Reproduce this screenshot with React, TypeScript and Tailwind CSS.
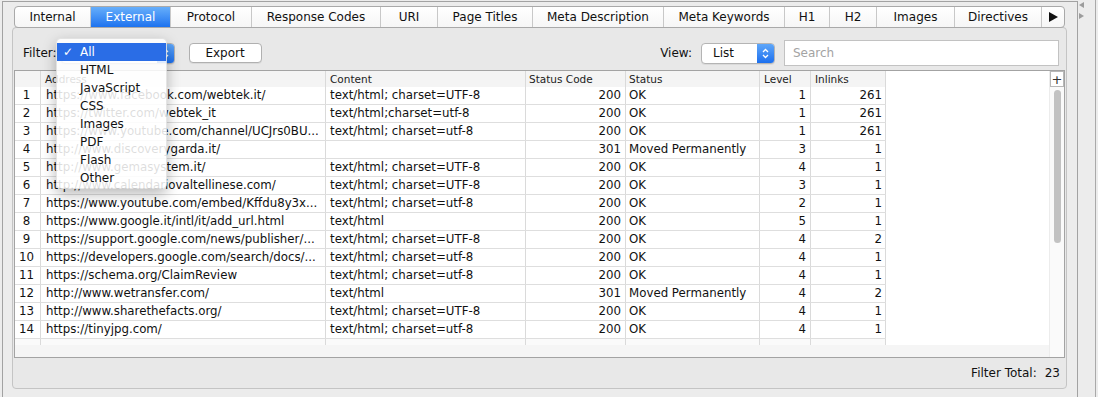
const tabs = [
  { name: "Internal", w: "w-[75px]" },
  { name: "External", w: "w-[80px]", active: true },
  { name: "Protocol", w: "w-[81px]" },
  { name: "Response Codes", w: "w-[129px]" },
  { name: "URI", w: "w-[57px]" },
  { name: "Page Titles", w: "w-[95px]" },
  { name: "Meta Description", w: "w-[131px]" },
  { name: "Meta Keywords", w: "w-[121px]" },
  { name: "H1", w: "w-[45px]" },
  { name: "H2", w: "w-[47px]" },
  { name: "Images", w: "w-[78px]" },
  { name: "Directives", w: "w-[87px]" },
];

const menuItems = ["All", "HTML", "JavaScript", "CSS", "Images", "PDF", "Flash", "Other"];

// address, content, status code, status, level, inlinks
const rows = [
  ["https://www.facebook.com/webtek.it/", "text/html; charset=UTF-8", "200", "OK", "1", "261"],
  ["https://twitter.com/webtek_it", "text/html;charset=utf-8", "200", "OK", "1", "261"],
  ["https://www.youtube.com/channel/UCJrs0BU...", "text/html; charset=utf-8", "200", "OK", "1", "261"],
  ["http://www.discoverygarda.it/", "", "301", "Moved Permanently", "3", "1"],
  ["http://www.gemasystem.it/", "text/html; charset=UTF-8", "200", "OK", "4", "1"],
  ["http://www.calendariovaltellinese.com/", "text/html; charset=UTF-8", "200", "OK", "3", "1"],
  ["https://www.youtube.com/embed/Kffdu8y3x...", "text/html; charset=utf-8", "200", "OK", "2", "1"],
  ["https://www.google.it/intl/it/add_url.html", "text/html", "200", "OK", "5", "1"],
  ["https://support.google.com/news/publisher/...", "text/html; charset=UTF-8", "200", "OK", "4", "2"],
  ["https://developers.google.com/search/docs/...", "text/html; charset=utf-8", "200", "OK", "4", "1"],
  ["https://schema.org/ClaimReview", "text/html; charset=utf-8", "200", "OK", "4", "1"],
  ["http://www.wetransfer.com/", "text/html", "301", "Moved Permanently", "4", "2"],
  ["http://www.sharethefacts.org/", "text/html; charset=UTF-8", "200", "OK", "4", "1"],
  ["https://tinyjpg.com/", "text/html; charset=utf-8", "200", "OK", "4", "1"],
];

const cell = "h-full border-r border-[#dadada] overflow-hidden whitespace-nowrap";

function Chevrons() {
  return (
    <svg width="7" height="11" viewBox="0 0 7 11" fill="none" stroke="white" strokeWidth="1.3">
      <path d="M1 4 L3.5 1.5 L6 4" />
      <path d="M1 7 L3.5 9.5 L6 7" />
    </svg>
  );
}

function Select({ label, className }: { label: string; className: string }) {
  return (
    <div
      className={`flex h-[21px] items-stretch overflow-hidden rounded-[4px] border border-[#b4b4b4] bg-white text-[12px] shadow-[0_1px_0_rgba(0,0,0,0.06)] ${className}`}
    >
      <div className="flex flex-1 items-center pl-[11px]">{label}</div>
      <div className="flex w-[17px] items-center justify-center bg-linear-to-b from-[#5ea6f9] to-[#1b6fee]">
        <Chevrons />
      </div>
    </div>
  );
}

export default function App() {
  return (
    <div className="relative flex h-[397px] w-[1098px] overflow-hidden bg-[#ececec] font-['DejaVu_Sans',sans-serif] text-[#111]">
      <div className="w-[2px] shrink-0" />

      {/* main area */}
      <div className="mt-[1px] flex w-[1076px] shrink-0 flex-col border-l border-t border-r border-[#a2a2a2]">
        {/* tab strip */}
        <div className="relative z-10 mt-[4px] flex pl-[11px]">
          <div className="flex h-[22px] overflow-hidden rounded-[4px] border border-[#a9a9a9] bg-linear-to-b from-white to-[#f6f6f6] text-[12px]">
            {tabs.map((t, i) => (
              <div
                key={t.name}
                className={`flex items-center justify-center ${t.w} ${i > 0 ? "border-l border-[#c8c8c8]" : ""} ${
                  t.active ? "bg-linear-to-b from-[#66aefa] to-[#1c72ef] text-white" : ""
                }`}
              >
                {t.name}
              </div>
            ))}
            <div className="flex w-[23px] items-center justify-center border-l border-[#c8c8c8]">
              <svg width="9" height="10" viewBox="0 0 9 10">
                <path d="M0 0 L9 5 L0 10 Z" fill="#111" />
              </svg>
            </div>
          </div>
        </div>

        {/* content panel */}
        <div className="-mt-[1px] ml-[9px] flex h-[362px] w-[1055px] flex-col rounded-[4px] border border-[#c4c4c4] bg-[#e8e8e8]">
          {/* filter row */}
          <div className="mt-[12px] flex h-[26px] items-center pl-[10px] pr-[7px] text-[12px]">
            <span>Filter:</span>
            <Select label="All" className="ml-[4px] w-[114px]" />
            <div className="ml-[14px] flex h-[20px] w-[73px] items-center justify-center rounded-[4px] border border-[#b0b0b0] bg-white shadow-[0_1px_0_rgba(0,0,0,0.06)]">
              Export
            </div>
            <span className="ml-auto">View:</span>
            <Select label="List" className="ml-[9px] w-[74px]" />
            <div className="ml-[9px] flex h-[26px] w-[275px] items-center border border-[#c2c2c2] bg-white pl-[8px] text-[#a3a3a3]">
              Search
            </div>
          </div>

          {/* table */}
          <div className="ml-[1px] mt-[4px] flex h-[288px] w-[1051px] border border-[#a3a3a3] bg-white">
            <div className="flex w-[1034px] flex-col">
              <div className="flex h-[274px]">
                <div className="flex w-[871px] flex-col">
                  {/* header */}
                  <div className="flex h-[16px] bg-[#f4f4f4] text-[10.5px] leading-[16px] text-[#222]">
                    <div className={`${cell} w-[26px] border-[#d6d6d6]`} />
                    <div className={`${cell} w-[285px] border-[#d6d6d6] pl-[4px]`}>Address</div>
                    <div className={`${cell} w-[200px] border-[#d6d6d6] pl-[4px]`}>Content</div>
                    <div className={`${cell} w-[100px] border-[#d6d6d6] pl-[3px]`}>Status Code</div>
                    <div className={`${cell} w-[134px] border-[#d6d6d6] pl-[3px]`}>Status</div>
                    <div className={`${cell} w-[51px] border-[#d6d6d6] pl-[4px]`}>Level</div>
                    <div className={`${cell} w-[75px] border-[#d6d6d6] pl-[4px]`}>Inlinks</div>
                  </div>
                  {/* rows */}
                  {rows.map((r, i) => (
                    <div key={i} className="flex h-[18px] border-b border-[#dedede] text-[11.8px] leading-[17px]">
                      <div className={`${cell} w-[26px] pr-[2px] text-center`}>{i + 1}</div>
                      <div className={`${cell} w-[285px] pl-[5px]`}>{r[0]}</div>
                      <div className={`${cell} w-[200px] pl-[4px]`}>{r[1]}</div>
                      <div className={`${cell} w-[100px] pr-[4px] text-right`}>{r[2]}</div>
                      <div className={`${cell} w-[134px] pl-[3px]`}>{r[3]}</div>
                      <div className={`${cell} w-[51px] pr-[4px] text-right`}>{r[4]}</div>
                      <div className={`${cell} w-[75px] pr-[3px] text-right`}>{r[5]}</div>
                    </div>
                  ))}
                  {/* partially visible row */}
                  <div className="flex h-[6px] bg-[#fafafa]">
                    <div className={`${cell} w-[26px]`} />
                    <div className={`${cell} w-[285px]`} />
                    <div className={`${cell} w-[200px]`} />
                    <div className={`${cell} w-[100px]`} />
                    <div className={`${cell} w-[134px]`} />
                    <div className={`${cell} w-[51px]`} />
                    <div className={`${cell} w-[75px]`} />
                  </div>
                </div>
                <div className="flex-1 bg-white" />
              </div>
              <div className="h-[12px] bg-[#f5f5f5]" />
            </div>

            {/* vertical scrollbar */}
            <div className="flex w-[15px] flex-col border-l border-[#ececec] bg-[#fafafa]">
              <div className="flex h-[16px] items-center justify-center border border-[#b8b8b8] bg-white text-[13px] leading-none text-[#333]">
                +
              </div>
              <div className="flex-1 pl-[4px] pt-[3px]">
                <div className="h-[153px] w-[7px] rounded-full bg-[#c2c2c2]" />
              </div>
            </div>
          </div>

          {/* footer */}
          <div className="flex flex-1 items-center justify-end pr-[6px] text-[12px]">
            <span>Filter Total:</span>
            <span className="ml-[8px]">23</span>
          </div>
        </div>
      </div>

      {/* tab scroll arrows and split divider */}
      <div className="flex w-[18px] shrink-0 flex-col border-r border-[#a9a9a9] pt-[2px]">
        <svg width="6" height="6" viewBox="0 0 6 6" className="ml-[1px]">
          <path d="M5 0 L0 3 L5 6 Z" fill="#9c9c9c" />
        </svg>
        <svg width="6" height="6" viewBox="0 0 6 6" className="ml-[1px] mt-[5px]">
          <path d="M0 0 L5 3 L0 6 Z" fill="#9c9c9c" />
        </svg>
      </div>

      {/* filter dropdown menu (open) */}
      <div className="absolute left-[56px] top-[38px] z-20 w-[111px] rounded-[5px] border border-black/10 bg-white/[0.86] pb-[1px] pt-[4px] text-[12px] shadow-[0_5px_14px_rgba(0,0,0,0.28)]">
        {menuItems.map((m, i) => (
          <div
            key={m}
            className={`relative flex h-[18px] items-center pl-[23px] ${i === 0 ? "bg-[#2a6de6] text-white" : "text-[#111]"}`}
          >
            {i === 0 && <span className="absolute left-[6px]">✓</span>}
            {m}
          </div>
        ))}
      </div>
    </div>
  );
}
